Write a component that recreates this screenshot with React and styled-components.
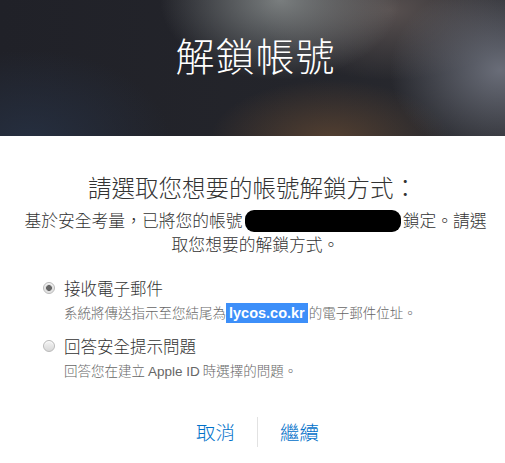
import React from "react";
import styled, { createGlobalStyle } from "styled-components";

const Global = createGlobalStyle`
  html, body { margin: 0; padding: 0; background: #fff; }
  body { font-family: "Noto Sans CJK TC", "Noto Sans", sans-serif; color: #333; }
`;

const Page = styled.div`
  width: 505px;
  height: 463px;
  overflow: hidden;
  display: flex;
  flex-direction: column;
`;

const Hero = styled.header`
  height: 136px;
  box-sizing: border-box;
  padding: 26px 0 0 6px;
  display: flex;
  justify-content: center;
  background:
    radial-gradient(ellipse 120px 80px at 280px 0px, rgba(135,140,140,0.85), rgba(135,140,140,0) 100%),
    radial-gradient(ellipse 110px 90px at 500px 70px, rgba(112,116,128,0.9), rgba(112,116,128,0) 100%),
    radial-gradient(ellipse 130px 70px at 390px 10px, rgba(100,90,88,0.8), rgba(100,90,88,0) 100%),
    radial-gradient(ellipse 120px 60px at 330px 140px, rgba(95,70,50,0.8), rgba(95,70,50,0) 100%),
    radial-gradient(ellipse 140px 90px at 30px 140px, rgba(38,48,66,0.9), rgba(38,48,66,0) 100%),
    linear-gradient(90deg, #202128, #24252b 60%, #2a2b30);
`;

const HeroTitle = styled.h1`
  margin: 0;
  font-weight: 300;
  font-size: 39px;
  line-height: 56px;
  color: #fff;
  letter-spacing: 1px;
`;

const Body = styled.main`
  display: flex;
  flex-direction: column;
  padding-top: 36px;
`;

const Heading = styled.h2`
  margin: 0;
  text-align: center;
  font-weight: 300;
  font-size: 23.5px;
  line-height: 30px;
  color: #333;
`;

const Intro = styled.p`
  margin: 6px 0 0;
  padding-left: 6px;
  text-align: center;
  font-size: 16.8px;
  font-weight: 300;
  line-height: 24px;
  color: #333;
`;

const Redacted = styled.span`
  display: inline-block;
  width: 156px;
  height: 22px;
  margin: 0 2px;
  background: #000;
  border-radius: 9px;
  vertical-align: -5px;
`;

const Options = styled.div`
  display: flex;
  flex-direction: column;
  gap: 10px;
  padding: 20px 0 0 43px;
`;

const Option = styled.label`
  display: grid;
  grid-template-columns: 12px 1fr;
  column-gap: 9px;
  align-items: center;
`;

const Radio = styled.span`
  width: 12px;
  height: 12px;
  box-sizing: border-box;
  border-radius: 50%;
  border: 1px solid #b9b9b9;
  background: ${p => p.$checked
    ? "radial-gradient(circle, #666 0 2.6px, #ddd 3.2px, #f2f2f2 100%)"
    : "linear-gradient(#f4f4f4, #d8d8d8)"};
  box-shadow: inset 0 1px 1px rgba(255,255,255,0.8);
`;

const OptionTitle = styled.span`
  font-size: 16.5px;
  font-weight: 300;
  line-height: 24px;
  color: #333;
`;

const OptionHint = styled.span`
  grid-column: 2;
  font-size: 13.5px;
  font-weight: 300;
  line-height: 24px;
  color: #666;
`;

const Mark = styled.span`
  display: inline-block;
  background: #3d8ff9;
  color: #fff;
  font-family: "Liberation Sans", Arial, sans-serif;
  font-weight: 700;
  font-size: 14.5px;
  line-height: 20px;
  padding: 0 3px;
  margin-right: 1px;
`;

const Latin = styled.span`
  font-family: "Liberation Sans", Arial, sans-serif;
`;

const Actions = styled.div`
  display: flex;
  justify-content: center;
  align-items: center;
  margin-top: 33px;
  padding-left: 10px;
`;

const ActionButton = styled.button`
  border: 0;
  background: none;
  font-family: inherit;
  font-size: 19.5px;
  font-weight: 300;
  line-height: 30px;
  color: #0070c9;
  padding: 0 22px;
  cursor: pointer;
`;

const Divider = styled.span`
  width: 1px;
  height: 30px;
  background: #e2e2e2;
`;

export default function App() {
  return (
    <Page>
      <Global />
      <Hero>
        <HeroTitle>解鎖帳號</HeroTitle>
      </Hero>
      <Body>
        <Heading>請選取您想要的帳號解鎖方式：</Heading>
        <Intro>
          基於安全考量，已將您的帳號<Redacted />鎖定。請選
          <br />
          取您想要的解鎖方式。
        </Intro>
        <Options>
          <Option>
            <Radio $checked />
            <OptionTitle>接收電子郵件</OptionTitle>
            <OptionHint>
              系統將傳送指示至您結尾為<Mark>lycos.co.kr</Mark>的電子郵件位址。
            </OptionHint>
          </Option>
          <Option>
            <Radio />
            <OptionTitle>回答安全提示問題</OptionTitle>
            <OptionHint>
              回答您在建立 <Latin>Apple ID</Latin> 時選擇的問題。
            </OptionHint>
          </Option>
        </Options>
        <Actions>
          <ActionButton>取消</ActionButton>
          <Divider />
          <ActionButton>繼續</ActionButton>
        </Actions>
      </Body>
    </Page>
  );
}
